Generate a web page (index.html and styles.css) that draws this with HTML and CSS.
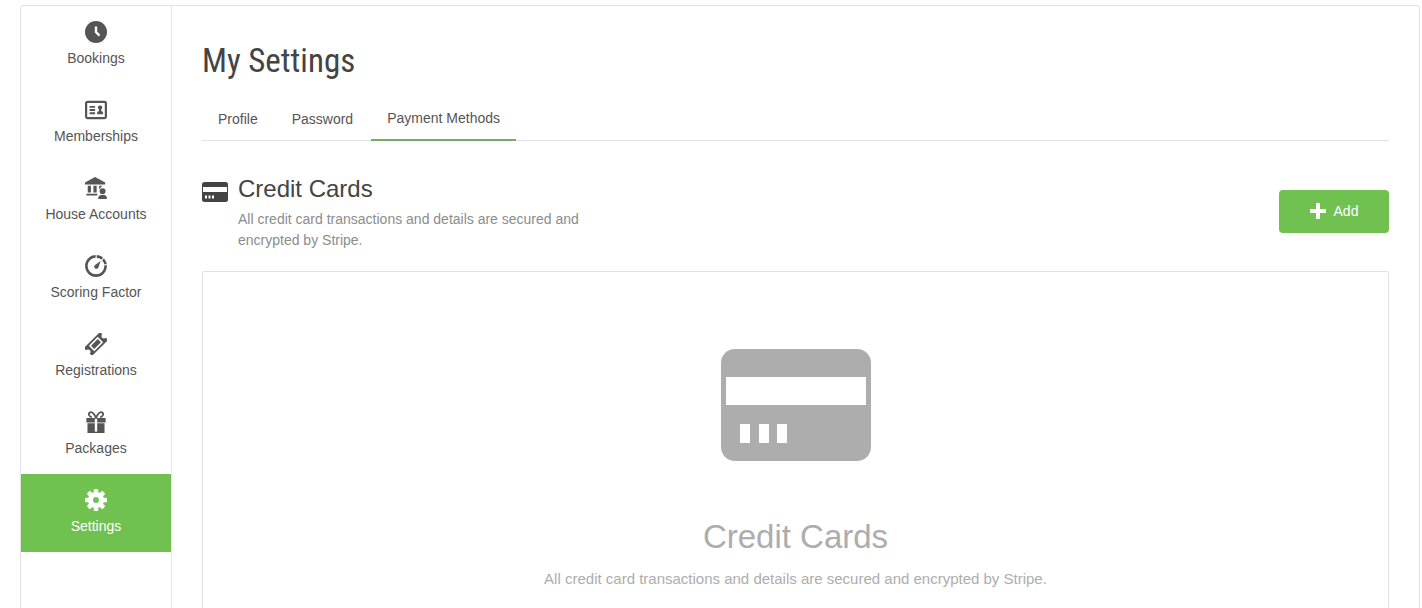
FILE: index.html
```html
<!DOCTYPE html>
<html lang="en">
<head>
    <meta charset="UTF-8">
    <meta name="viewport" content="width=device-width, initial-scale=1.0">
    <title>My Settings</title>
    <link rel="stylesheet" href="styles.css">
</head>
<body>
    <div class="wrapper">
        <nav class="sidebar">
            <a href="#bookings" class="nav-item">
                <svg class="nav-icon" viewBox="0 0 24 24"><circle cx="12" cy="12" r="12" fill="currentColor"/><path d="M12 6v6l3.8 4" fill="none" stroke="#fff" stroke-width="2.6"/></svg>
                <span>Bookings</span>
            </a>
            <a href="#memberships" class="nav-item">
                <svg class="nav-icon" viewBox="0 0 24 24" fill="none" stroke="currentColor" stroke-width="2"><rect x="1.2" y="3.2" width="21.6" height="17.600" rx="1.5" stroke-width="2.4"/><path d="M5 8.500h6M5 12h6M5 15.500h6"/><path d="M16.500 7c3.200 0 2.700 3.400 1.200 4.400v1.600l2 1.200v2.300h-6.400v-2.300l2-1.200v-1.600c-1.500-1-2-4.400 1.200-4.400z" fill="currentColor" stroke="none"/></svg>
                <span>Memberships</span>
            </a>
            <a href="#house-accounts" class="nav-item">
                <svg class="nav-icon" viewBox="0 0 24 24" fill="currentColor"><path d="M11 0l11 6v2.200H0V6zM3 9.600h3.500V17H3zM9.200 9.600h3.500V17H9.200zM15.500 9.600h3.300L16.800 12l-1.300 2zM1.500 18.200h12.300l-.8 2H1.500z"/><circle cx="19.200" cy="15.600" r="3.200"/><path d="M14.300 24c0-3.200 1.500-4.200 3.500-4.500h2.800c2 .3 3.400 1.300 3.400 4.500z"/></svg>
                <span>House Accounts</span>
            </a>
            <a href="#scoring-factor" class="nav-item">
                <svg class="nav-icon" viewBox="0 0 24 24"><circle cx="12" cy="12" r="10.500" fill="none" stroke="currentColor" stroke-width="2.800"/><path d="M12.200 0v4M17.800 6.200l2.700-3.300M20 10.600h4" stroke="#fff" stroke-width="1.200"/><path d="M17 6.500l-2.300 6.800c-.5 1.600-2.300 2.300-3.700 1.300-1.300-1-1.200-2.700 0-3.700z" fill="currentColor"/></svg>
                <span>Scoring Factor</span>
            </a>
            <a href="#registrations" class="nav-item">
                <svg class="nav-icon" viewBox="0 0 24 24"><g transform="rotate(-45 12 12)"><path d="M1.500 5.800h21c1.500 0 2 .8 2 2s-.7 1.700-1.700 2c-1.800.7-1.800 3.700 0 4.400 1 .3 1.700.8 1.700 2s-.5 2-2 2h-21c-1.500 0-2-.8-2-2s.7-1.700 1.700-2c1.800-.7 1.800-3.700 0-4.400-1-.3-1.700-.8-1.700-2s.5-2 2-2z" fill="currentColor"/><rect x="6" y="8.700" width="12" height="6.600" fill="none" stroke="#fff" stroke-width="1.700"/></g></svg>
                <span>Registrations</span>
            </a>
            <a href="#packages" class="nav-item">
                <svg class="nav-icon" viewBox="0 0 24 24" fill="currentColor"><path d="M1.500 7.500h21v5h-21zM2.700 13.300h18.600V24H2.700z"/><path d="M12 7.500C10 3 7.500.7 5.500 1.400 3 2.300 4.500 6.500 7.500 7M12 7.500C14 3 16.500.7 18.500 1.400 21 2.300 19.500 6.500 16.500 7" fill="none" stroke="currentColor" stroke-width="2"/><path d="M10.700 8.500h2.600v14h-2.600z" fill="#fff"/></svg>
                <span>Packages</span>
            </a>
            <a href="#settings" class="nav-item active">
                <svg class="nav-icon" viewBox="0 0 24 24" fill="currentColor"><circle cx="12" cy="12" r="6" fill="none" stroke="currentColor" stroke-width="5.600"/><g id="teeth"><rect x="9.500" y="0" width="5" height="4.500" rx="1"/><rect x="9.500" y="19.500" width="5" height="4.500" rx="1"/><rect x="0" y="9.500" width="4.500" height="5" rx="1"/><rect x="19.500" y="9.500" width="4.500" height="5" rx="1"/></g><use href="#teeth" transform="rotate(45 12 12)"/></svg>
                <span>Settings</span>
            </a>
        </nav>

        <main class="content">
            <h1>My Settings</h1>

            <nav class="tabs">
                <a href="#profile" class="tab">Profile</a>
                <a href="#password" class="tab">Password</a>
                <a href="#payment-methods" class="tab active">Payment Methods</a>
            </nav>

            <header class="section-header">
                <svg class="section-icon" viewBox="0 0 26 20"><rect width="26" height="20" rx="2.500" fill="currentColor"/><path d="M1 5h24v5H1zM3 13.500h2v3H3zM6.500 13.500h2v3h-2zM10 13.500h2v3h-2z" fill="#fff"/></svg>
                <div class="section-text">
                    <h2>Credit Cards</h2>
                    <p>All credit card transactions and details are secured and encrypted by Stripe.</p>
                </div>
                <button type="button" class="add-button">
                    <svg class="plus" viewBox="0 0 16 16"><path d="M8 0v16M0 8h16" stroke="currentColor" stroke-width="4"/></svg>
                    Add
                </button>
            </header>

            <section class="empty">
                <svg class="empty-icon" viewBox="0 0 150 112"><rect width="150" height="112" rx="14" fill="currentColor"/><path d="M5 28h140v28H5zM19 75h10v19H19zM38 75h10v19H38zM56 75h10v19H56z" fill="#fff"/></svg>
                <h3>Credit Cards</h3>
                <p>All credit card transactions and details are secured and encrypted by Stripe.</p>
            </section>
        </main>
    </div>
</body>
</html>
```
FILE: styles.css
```css
* {
    box-sizing: border-box;
}

body {
    margin: 0;
    font-family: "Liberation Sans", Arial, sans-serif;
    font-size: 14px;
    color: #555;
    background-color: #fff;
}

h1, h2, h3, p {
    margin: 0;
    font-weight: normal;
}

a {
    color: inherit;
    text-decoration: none;
}

.wrapper {
    display: flex;
    margin: 5px 2px 0 20px;
    border: 1px solid #e2e2e2;
    border-radius: 3px;
}

/* Left navigation */
.sidebar {
    flex: none;
    width: 151px;
    border-right: 1px solid #e8e8e8;
}

.nav-item {
    display: flex;
    flex-direction: column;
    align-items: center;
    gap: 4px;
    height: 78px;
    padding-top: 14px;
    line-height: 20px;
}

.nav-item.active {
    color: #fff;
    background-color: #71c150;
}

.nav-icon {
    width: 24px;
    height: 24px;
    padding: 1px;
}

/* Main area */
.content {
    flex: 1;
    padding: 30px;
}

h1 {
    font-family: "Roboto Condensed", "Open Sans Condensed", "Noto Sans CJK SC", sans-serif;
    font-size: 33px;
    line-height: 50px;
    color: #444;
}

.tabs {
    display: flex;
    gap: 2px;
    height: 55px;
    padding-top: 13px;
    border-bottom: 1px solid #e2e2e2;
}

.tab {
    height: 42px;
    padding: 0 16px;
    line-height: 40px;
}

.tab.active {
    line-height: 38px;
    border-bottom: 2px solid #78ab68;
}

.section-header {
    display: flex;
    align-items: flex-start;
    padding: 32px 0 20px;
}

.section-icon {
    width: 26px;
    height: 20px;
    margin: 9px 10px 0 0;
    color: #444;
}

.section-text {
    width: 360px;
}

h2 {
    font-size: 24px;
    line-height: 32px;
    color: #444;
}

.section-text p {
    padding-top: 4px;
    line-height: 21px;
    color: #8c8c8c;
}

.add-button {
    display: flex;
    align-items: center;
    justify-content: center;
    gap: 8px;
    width: 110px;
    height: 43px;
    margin: 17px 0 0 auto;
    padding-bottom: 3px;
    border: none;
    border-radius: 4px;
    font-family: inherit;
    font-size: 14px;
    color: #fff;
    background-color: #71c150;
    cursor: pointer;
}

.plus {
    width: 16px;
    height: 16px;
}

/* Shown when there are no saved cards */
.empty {
    display: flex;
    flex-direction: column;
    align-items: center;
    padding: 77px 20px;
    border: 1px solid #e2e2e2;
    border-radius: 2px;
    text-align: center;
    color: #adadad;
}

.empty-icon {
    width: 150px;
    height: 112px;
}

h3 {
    padding-top: 54px;
    font-size: 33px;
    line-height: 44px;
}

.empty p {
    padding-top: 10px;
    font-size: 15px;
    line-height: 20px;
}
```
